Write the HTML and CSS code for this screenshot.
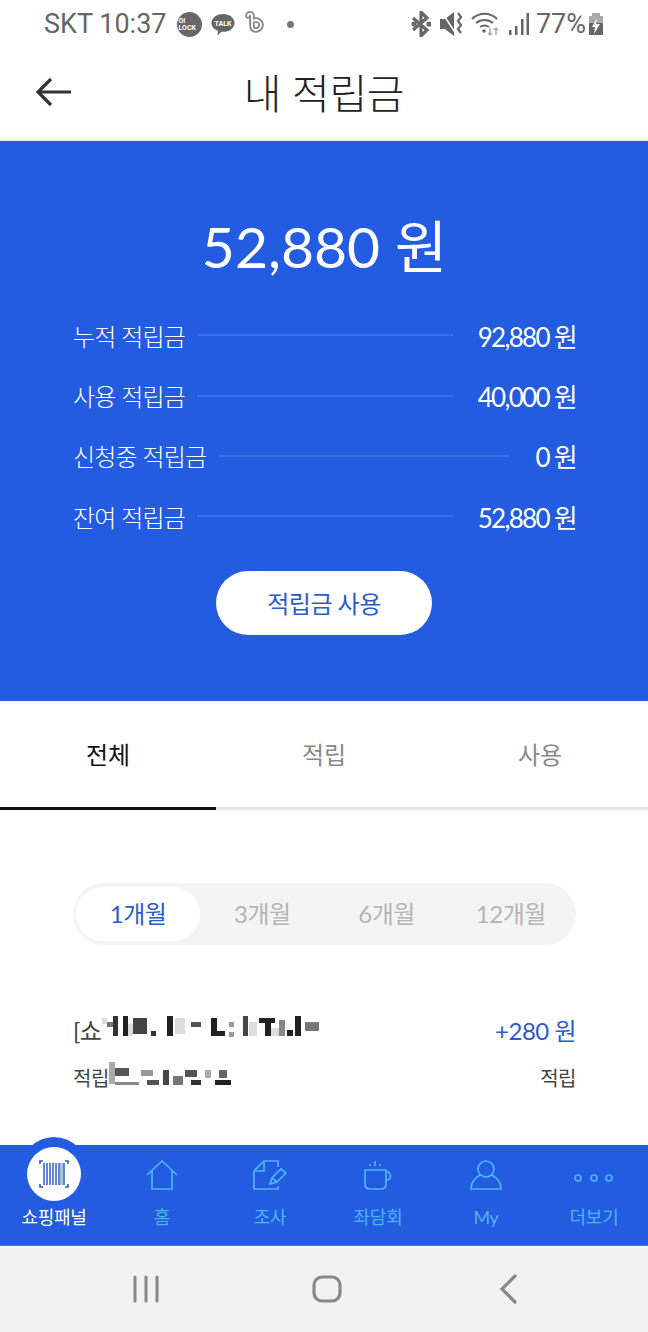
FILE: index.html
```html
<!DOCTYPE html>
<html lang="ko">
<head>
  <meta charset="UTF-8">
  <title>내 적립금</title>
  <link rel="stylesheet" href="styles.css">
</head>
<body>
<div class="pantalla">

  <!-- status bar -->
  <div class="status">
    <div class="status-izq">
      <span class="status-texto">SKT 10:37</span>
      <span class="ic-lock">OI<br>LOCK</span>
      <svg class="ic-talk" width="26" height="26" viewBox="0 0 26 26"><path d="M13 3c6.400 0 11.500 3.900 11.500 8.900s-5.100 8.900-11.500 8.900h-1.500l-4 3.700.6-4.600C4 18.400 1.500 15.400 1.500 11.900 1.500 6.900 6.600 3 13 3z" fill="#666"/><text x="13" y="15" text-anchor="middle" class="talk-txt">TALK</text></svg>
      <svg class="ic-b" width="24" height="28" viewBox="0 0 24 28" fill="none"><path d="M5 6c0-3 4-3 4 0v6c0 6 0 8 4 8a5 5 0 1 0-4-8" stroke="#888" stroke-width="5.500" stroke-linecap="round"/><path d="M5 6c0-3 4-3 4 0v6c0 6 0 8 4 8a5 5 0 1 0-4-8" stroke="#fff" stroke-width="1.800" stroke-linecap="round"/></svg>
      <span class="status-punto"></span>
    </div>
    <div class="status-der">
      <svg width="20" height="26" viewBox="0 0 20 26" fill="none" stroke="#666" stroke-width="3.200"><path d="M2 7l14 12-6 6V1l6 6L2 19"/><circle cx="3" cy="13" r="1" fill="#666"/><circle cx="18" cy="13" r="1" fill="#666"/></svg>
      <svg width="24" height="26" viewBox="0 0 24 26"><path d="M1 8h5l9-7 0 24-9-7H1z" fill="#666"/><path d="M4 3l13 20" stroke="#fff" stroke-width="1.500"/><path d="M19 2l3 4-3 4 3 4-3 4 3 4" fill="none" stroke="#666" stroke-width="2.200"/></svg>
      <svg width="30" height="28" viewBox="0 0 30 28" fill="none" stroke="#666" stroke-width="2"><path d="M1 9c7-7 18-7 25 0M5 13c5-4 12-4 17 0M9 17c3-2 6-2 9 0"/><circle cx="13" cy="21" r="1.800" fill="#666" stroke="none"/><path d="M19 18v7M17 23l2 2 2-2M25 25v-7M23 20l2-2 2 2" stroke="#aaa" stroke-width="1.500"/></svg>
      <svg width="20" height="26" viewBox="0 0 20 26" fill="#666"><rect x="0" y="19" width="2.500" height="5"/><rect x="6" y="15" width="2.500" height="9"/><rect x="12" y="8" width="2.500" height="16"/><rect x="17.500" y="2" width="2.500" height="22"/></svg>
      <span class="status-texto status-pct">77%</span>
      <svg width="16" height="26" viewBox="0 0 16 26"><rect x="4" y="2" width="8" height="4" fill="#aaa"/><rect x="1" y="5" width="14" height="8" fill="#aaa"/><rect x="1" y="12" width="14" height="12" fill="#666"/><path d="M9 7l-5 9h3l-1 7 6-10H8z" fill="#fff"/></svg>
    </div>
  </div>

  <!-- header -->
  <header class="cabecera">
    <svg class="ic-volver" width="38" height="30" viewBox="0 0 38 30" fill="none" stroke="#333" stroke-width="3.200"><path d="M36 15H3M16 2L3 15l13 13"/></svg>
    <h1>내 적립금</h1>
  </header>

  <!-- saldo -->
  <section class="saldo">
    <div class="saldo-total">52,880 원</div>
    <div class="saldo-fila"><span>누적 적립금</span><i></i><b>92,880 원</b></div>
    <div class="saldo-fila"><span>사용 적립금</span><i></i><b>40,000 원</b></div>
    <div class="saldo-fila"><span>신청중 적립금</span><i></i><b>0 원</b></div>
    <div class="saldo-fila"><span>잔여 적립금</span><i></i><b>52,880 원</b></div>
    <button class="btn-usar">적립금 사용</button>
  </section>

  <!-- tabs -->
  <nav class="tabs">
    <div class="tab activo">전체</div>
    <div class="tab">적립</div>
    <div class="tab">사용</div>
  </nav>

  <main class="contenido">
    <div class="rango">
      <div class="rango-item activo">1개월</div>
      <div class="rango-item">3개월</div>
      <div class="rango-item">6개월</div>
      <div class="rango-item">12개월</div>
    </div>

    <div class="mov">
      <div class="mov-fila">
        <div class="mov-titulo">[쇼
          <svg class="mosaico" width="220" height="30" viewBox="0 0 220 30">
            <g fill="#222">
              <rect x="6" y="8" width="6" height="5" fill="#777"/><rect x="12" y="2" width="5" height="20" fill="#333"/><rect x="22" y="2" width="5" height="20"/><rect x="32" y="4" width="14" height="16" fill="#444"/><rect x="50" y="17" width="5" height="5" fill="#333"/><rect x="66" y="2" width="6" height="20"/><rect x="90" y="8" width="10" height="5" fill="#555"/><rect x="110" y="4" width="6" height="18"/><rect x="116" y="17" width="8" height="5"/><rect x="128" y="8" width="5" height="5" fill="#999"/><rect x="128" y="18" width="5" height="5" fill="#999"/><rect x="142" y="2" width="5" height="20" fill="#444"/><rect x="158" y="4" width="16" height="5"/><rect x="164" y="9" width="6" height="13"/><rect x="178" y="6" width="6" height="16" fill="#888"/><rect x="186" y="16" width="6" height="6"/><rect x="194" y="2" width="6" height="20"/><rect x="204" y="8" width="14" height="9" fill="#777"/>
            </g>
            <g fill="#ddd"><rect x="1" y="4" width="5" height="6"/><rect x="27" y="10" width="5" height="12"/><rect x="74" y="4" width="10" height="16"/><rect x="148" y="8" width="8" height="14"/><rect x="170" y="14" width="8" height="8"/></g>
          </svg>
        </div>
        <div class="mov-monto">+280 원</div>
      </div>
      <div class="mov-fila mov-sub">
        <div class="mov-fecha">적립
          <svg class="mosaico" width="130" height="30" viewBox="0 0 130 30">
            <g fill="#555">
              <rect x="0" y="0" width="6" height="22" fill="#aaa"/><rect x="6" y="6" width="14" height="8"/><rect x="6" y="20" width="24" height="3" fill="#888"/><rect x="32" y="8" width="12" height="6" fill="#999"/><rect x="38" y="18" width="12" height="5"/><rect x="54" y="8" width="6" height="15" fill="#444"/><rect x="64" y="14" width="10" height="9" fill="#777"/><rect x="76" y="8" width="12" height="7"/><rect x="82" y="18" width="10" height="5" fill="#333"/><rect x="96" y="8" width="6" height="8" fill="#aaa"/><rect x="110" y="8" width="8" height="8" fill="#666"/><rect x="106" y="18" width="16" height="5" fill="#222"/>
            </g>
          </svg>
        </div>
        <div>적립</div>
      </div>
    </div>
  </main>

  <!-- menu inferior -->
  <nav class="menu">
    <div class="menu-item activo">
      <span class="barcode-fondo"></span>
      <span class="barcode">
        <svg width="38" height="30" viewBox="0 0 38 30" fill="none" stroke="#2a5cc8" stroke-width="1.600">
          <path d="M5 5V2h3M30 2h3v3M5 25v3h3M30 28h3v-3"/>
          <path d="M9 4v22M12 4v22M15 4v22M18 4v22M21 4v22M24 4v22M29 4v22" stroke="#3d68c8"/>
          <path d="M26.500 4v22" stroke="#a9c0ee" stroke-width="3"/>
        </svg>
      </span>
      <span class="menu-txt">쇼핑패널</span>
    </div>
    <div class="menu-item">
      <svg class="menu-ic" width="32" height="30" viewBox="0 0 32 30" fill="none" stroke="#4db5f5" stroke-width="1.700"><path d="M1 15L16 1l15 14M6 11v18h20V11"/></svg>
      <span class="menu-txt">홈</span>
    </div>
    <div class="menu-item">
      <svg class="menu-ic" width="34" height="30" viewBox="0 0 34 30" fill="none" stroke="#4db5f5" stroke-width="1.700"><path d="M25 7V1H11L1 11v18h24v-3M11 1v10H1"/><path d="M17 24l2-6 9-9 5 4-9 9zM19 18l5 4"/></svg>
      <span class="menu-txt">조사</span>
    </div>
    <div class="menu-item">
      <svg class="menu-ic" width="28" height="30" viewBox="0 0 28 30" fill="none" stroke="#4db5f5" stroke-width="1.700"><path d="M1 10h21v14c0 3-2 5-5 5H6c-3 0-5-2-5-5zM22 12c6-1 6 9 0 8M6 6V4M11 6V1M16 6V4"/></svg>
      <span class="menu-txt">좌담회</span>
    </div>
    <div class="menu-item">
      <svg class="menu-ic" width="32" height="30" viewBox="0 0 32 30" fill="none" stroke="#4db5f5" stroke-width="1.700"><circle cx="16" cy="9" r="8"/><path d="M10 15C5 18 1 23 1 29h30c0-6-4-11-9-14"/></svg>
      <span class="menu-txt">My</span>
    </div>
    <div class="menu-item">
      <svg class="menu-ic" width="40" height="30" viewBox="0 0 40 30" fill="none" stroke="#4db5f5" stroke-width="1.700"><circle cx="4" cy="18" r="3"/><circle cx="20" cy="18" r="3"/><circle cx="35" cy="18" r="3"/></svg>
      <span class="menu-txt">더보기</span>
    </div>
  </nav>

  <!-- android nav -->
  <div class="sistema">
    <svg width="28" height="28" viewBox="0 0 28 28" fill="none" stroke="#888" stroke-width="3" stroke-linecap="round"><path d="M3 2v24M14 2v24M25 2v24"/></svg>
    <svg width="30" height="28" viewBox="0 0 30 28" fill="none" stroke="#888" stroke-width="3.200"><rect x="2" y="2" width="26" height="24" rx="8"/></svg>
    <svg width="20" height="30" viewBox="0 0 20 30" fill="none" stroke="#888" stroke-width="3.200" stroke-linecap="round"><path d="M16 2L3 15l13 13"/></svg>
  </div>

</div>
</body>
</html>
```

FILE: styles.css
```css
* {
  box-sizing: border-box;
}
body {
  margin: 0;
  font-family: Lato, "Noto Sans CJK KR", sans-serif;
  color: #333;
  background: #fff;
}
.pantalla {
  width: 648px;
  height: 1332px;
  display: flex;
  flex-direction: column;
  overflow: hidden;
}

/* status bar */
.status {
  height: 46px;
  flex: none;
  display: flex;
  justify-content: space-between;
  align-items: center;
  padding: 2px 44px 0 44px;
}
.status-izq,
.status-der {
  display: flex;
  align-items: center;
}
.status-texto {
  font-family: Roboto, sans-serif;
  font-size: 27px;
  color: #666;
}
.ic-lock {
  width: 25px;
  height: 25px;
  margin-left: 10px;
  border-radius: 50%;
  background: #666;
  color: #fff;
  font-family: Roboto, sans-serif;
  font-size: 7px;
  font-weight: 700;
  line-height: 7px;
  padding: 6px 0 0 2px;
}
.ic-talk {
  margin-left: 8px;
}
.talk-txt {
  font-family: Roboto, sans-serif;
  font-size: 7px;
  font-weight: 700;
  fill: #fff;
}
.ic-b {
  margin-left: 7px;
}
.status-punto {
  width: 7px;
  height: 7px;
  margin-left: 20px;
  border-radius: 50%;
  background: #777;
}
.status-der svg {
  margin-left: 8px;
}
.status-der .status-pct {
  margin-left: 7px;
}
.status-der svg:last-child {
  margin-left: 2px;
}

/* header */
.cabecera {
  height: 95px;
  flex: none;
  display: flex;
  align-items: center;
  justify-content: center;
  padding-bottom: 5px;
  border-bottom: 1px solid #e6e6e6;
  position: relative;
}
.cabecera h1 {
  margin: 0;
  font-size: 41px;
  font-weight: 300;
  color: #222;
  letter-spacing: -0.3px;
}
.ic-volver {
  position: absolute;
  left: 35px;
  top: 31px;
}

/* saldo */
.saldo {
  height: 560px;
  flex: none;
  background: #235ce1;
  color: #fff;
  padding: 68px 72px 0 73px;
  display: flex;
  flex-direction: column;
}
.saldo-total {
  font-size: 57px;
  line-height: 74px;
  text-align: center;
  margin-bottom: 22px;
}
.saldo-fila {
  height: 60.400px;
  display: flex;
  align-items: center;
  font-size: 24px;
  letter-spacing: -0.8px;
}
.saldo-fila span {
  font-weight: 300;
}
.saldo-fila i {
  flex: 1;
  height: 2px;
  margin: 0 25px 0 12px;
  background: #3b6fe9;
}
.saldo-fila b {
  font-weight: 400;
  font-size: 26px;
  letter-spacing: -1.700px;
}
.btn-usar {
  width: 216px;
  height: 64px;
  margin: 24px 0 0 143px;
  border: none;
  border-radius: 32px;
  background: #fff;
  color: #2a5cc8;
  font-family: inherit;
  font-size: 24px;
  letter-spacing: -0.5px;
}

/* tabs */
.tabs {
  height: 109px;
  flex: none;
  display: grid;
  grid-template-columns: repeat(3, 1fr);
}
.tab {
  display: flex;
  align-items: center;
  justify-content: center;
  padding-bottom: 1px;
  font-size: 24px;
  color: #888;
  border-bottom: 3px solid #e6e6e6;
}
.tab.activo {
  color: #111;
  border-bottom-color: #111;
}

/* contenido */
.contenido {
  flex: 1;
  padding: 73px 72px 0 73px;
}
.rango {
  height: 62px;
  padding: 4px 3px;
  display: grid;
  grid-template-columns: repeat(4, 1fr);
  border-radius: 31px;
  background: #f4f4f4;
}
.rango-item {
  display: flex;
  align-items: center;
  justify-content: center;
  padding-bottom: 3px;
  border-radius: 27px;
  font-size: 24px;
  letter-spacing: -0.5px;
  color: #b5b5b5;
}
.rango-item.activo {
  background: #fff;
  color: #2a5cc8;
}
.mov {
  margin-top: 62px;
}
.mov-fila {
  display: flex;
  justify-content: space-between;
  align-items: center;
  height: 44px;
  font-size: 24px;
  letter-spacing: -0.5px;
  color: #444;
}
.mov-monto {
  color: #2a5cc8;
}
.mov-sub {
  margin-top: 4px;
  font-size: 20px;
}
.mov-titulo,
.mov-fecha {
  display: flex;
  align-items: center;
}
.mosaico {
  flex: none;
}

/* menu inferior */
.menu {
  height: 101px;
  flex: none;
  display: grid;
  grid-template-columns: repeat(6, 1fr);
  background: #235ce1;
  border-bottom: 1px solid #4a7be8;
}
.menu-item {
  position: relative;
  display: flex;
  flex-direction: column;
  align-items: center;
  padding-top: 15px;
  color: #4db5f5;
}
.menu-ic {
  flex: none;
}
.menu-txt {
  margin-top: auto;
  margin-bottom: 15px;
  font-size: 18px;
  line-height: 26px;
  letter-spacing: -0.3px;
}
.menu-item.activo {
  color: #fff;
}
.barcode-fondo {
  position: absolute;
  left: 21px;
  top: -8px;
  width: 66px;
  height: 66px;
  border-radius: 50%;
  background: #235ce1;
}
.barcode {
  position: absolute;
  left: 27px;
  top: 2px;
  width: 54px;
  height: 54px;
  border-radius: 50%;
  background: #fff;
  display: flex;
  align-items: center;
  justify-content: center;
}

/* android nav */
.sistema {
  height: 86px;
  flex: none;
  background: #f2f2f2;
  display: grid;
  grid-template-columns: repeat(3, 1fr);
  align-items: center;
  justify-items: center;
  padding: 0 48px 0 55px;
}
```
